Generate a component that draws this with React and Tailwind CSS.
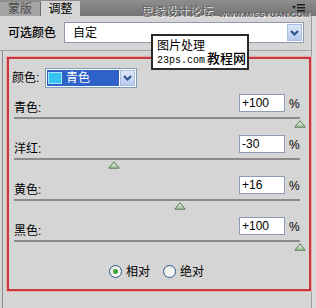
import React from 'react';

const FONT = { fontFamily: '"Liberation Sans", "Noto Sans CJK SC", sans-serif' };

const rows = [
  { label: '青色:', value: 100 },
  { label: '洋红:', value: -30 },
  { label: '黄色:', value: 16 },
  { label: '黑色:', value: 100 },
];

function Chevron({ className }) {
  return (
    <svg width="9" height="6" viewBox="0 0 9 6" className={className}>
      <path d="M1 1 L4.5 4.5 L8 1" fill="none" stroke="#2b4f8f" strokeWidth="2" />
    </svg>
  );
}

function Thumb() {
  return (
    <svg width="12" height="8" viewBox="0 0 12 8">
      <defs>
        <linearGradient id="tg" x1="0" y1="0" x2="0" y2="1">
          <stop offset="0" stopColor="#f4f8f2" />
          <stop offset="1" stopColor="#9cbf95" />
        </linearGradient>
      </defs>
      <path d="M6 0.8 L11.2 7.2 L0.8 7.2 Z" fill="url(#tg)" stroke="#587a56" strokeWidth="1" strokeLinejoin="round" />
    </svg>
  );
}

function SliderRow({ label, value }) {
  // track runs from -100 to +100 over 286px
  const left = ((value + 100) / 200) * 286;
  return (
    <div className="h-[41px] pl-[5px] pr-[9px]">
      <div className="flex items-end h-[18px]">
        <span className="flex-1 leading-[12px] mb-[-2px]">{label}</span>
        <div className="w-[46px] h-[18px] bg-white border border-[#8d9bb3] flex items-center pl-[2px] text-[12px] leading-none">
          {value > 0 ? `+${value}` : value}
        </div>
        <span className="w-[11px] ml-[4px] leading-[12px] mb-[2px] text-[12px]">%</span>
      </div>
      <div className="relative mt-[5px] h-[2px] bg-[#8b8b8b]">
        <div className="absolute top-[3px]" style={{ left: left - 6 }}>
          <Thumb />
        </div>
      </div>
    </div>
  );
}

export default function App() {
  return (
    <div className="relative w-[316px] h-[308px] overflow-hidden bg-[#dadada] text-[12px] text-black" style={FONT}>
      <div className="w-[312px] h-full bg-[#d5d5d5] border-r border-[#9c9c9c]">
        {/* tab strip */}
        <div className="h-[16px] flex items-end bg-linear-to-b from-[#8e8e8e] to-[#747474] w-[316px]">
          <div className="w-[41px] h-[14px] bg-[#a4a4a4] border-r border-[#6c6c6c] text-[#4d4d4d] flex items-center justify-center leading-none">
            蒙版
          </div>
          <div className="w-[39px] h-[15px] bg-[#d5d5d5] flex items-center justify-center leading-none">
            调整
          </div>
          <div className="ml-auto mr-[11px] mb-[4px] flex items-center gap-[1px]">
            <svg width="13" height="8" viewBox="0 0 13 8">
              <path d="M0 2 L4 2 L2 5 Z" fill="#1e1e1e" />
              <rect x="5" y="0" width="8" height="1.5" fill="#1e1e1e" />
              <rect x="5" y="3" width="8" height="1.5" fill="#1e1e1e" />
              <rect x="5" y="6" width="8" height="1.5" fill="#1e1e1e" />
            </svg>
          </div>
        </div>

        {/* preset row */}
        <div className="mt-[6px] flex items-center h-[21px]">
          <span className="w-[64px] pl-[8px] leading-none font-medium">可选颜色</span>
          <div className="w-[240px] h-[21px] bg-white border border-[#8e9aab] flex items-center">
            <span className="flex-1 pl-[8px] leading-none">自定</span>
            <div className="w-[15px] h-[17px] mr-[1px] bg-linear-to-b from-[#dbe6f8] to-[#b8cbee] border border-[#a9bde0] flex items-center justify-center">
              <Chevron />
            </div>
          </div>
        </div>

        <div className="mt-[7px] h-px bg-[#a2a2a2]" />

        <div className="ml-[2px] h-[258px] border-l border-[#8a8a8a] pt-[6px]">
          <div className="ml-[4px] w-[304px] h-[234px] border-2 border-[#c9373b] shadow-[0_0_0_1px_#e9a9aa]">
            {/* colour select */}
            <div className="mt-[9px] pl-[3px] flex items-center">
              <span className="w-[33px] leading-none">颜色:</span>
              <div className="w-[92px] h-[20px] border border-[#7f9db9] bg-white p-[1px] flex">
                <div className="flex-1 bg-[#2f62c8] flex items-center">
                  <div className="ml-[1px] w-[14px] h-[12px] bg-[#35c3f2] border border-[#a6e4fa]" />
                  <span className="ml-[4px] text-white leading-none">青色</span>
                </div>
                <div className="w-[15px] ml-[1px] bg-linear-to-b from-[#dce7f9] to-[#b7caee] border border-[#a9bde0] flex items-center justify-center">
                  <Chevron />
                </div>
              </div>
            </div>

            <div className="mt-[6px]">
              {rows.map((r) => (
                <SliderRow key={r.label} label={r.label} value={r.value} />
              ))}
            </div>

            {/* mode radios */}
            <div className="mt-[7px] pl-[100px] flex items-center">
              <span className="w-[13px] h-[13px] rounded-full border border-[#2a5a8c] bg-linear-to-br from-[#e6e6e0] to-white flex items-center justify-center">
                <span className="w-[5px] h-[5px] rounded-full bg-[#3fa53a]" />
              </span>
              <span className="ml-[4px] leading-none">相对</span>
              <span className="ml-[13px] w-[13px] h-[13px] rounded-full border border-[#2a5a8c] bg-linear-to-br from-[#e6e6e0] to-white" />
              <span className="ml-[4px] leading-none">绝对</span>
            </div>
          </div>
        </div>
      </div>

      {/* watermark, top */}
      <div className="absolute left-[141px] top-[6px] flex items-end gap-[6px] text-[#5e5e5e] [text-shadow:1px_1px_0_#e8e8e8]">
        <span className="text-[12px] leading-[12px]">思缘设计论坛</span>
        <span className="text-[8px] leading-[8px] font-bold tracking-[0.2px] mb-[-1px]">WWW.MISSYUAN.COM</span>
      </div>

      {/* watermark box */}
      <div className="absolute left-[151px] top-[34px] w-[98px] h-[36px] bg-white border-2 border-[#2a2a2a] flex items-end pl-[4px] pb-[2px]">
        <div className="flex flex-col">
          <span className="text-[12px] leading-[13px]">图片处理</span>
          <span className="text-[10px] leading-[10px] mt-[3px]" style={{ fontFamily: '"Liberation Mono", monospace' }}>23ps.com</span>
        </div>
        <span className="ml-[2px] text-[13px] leading-[14px] font-medium">教程网</span>
      </div>
    </div>
  );
}
